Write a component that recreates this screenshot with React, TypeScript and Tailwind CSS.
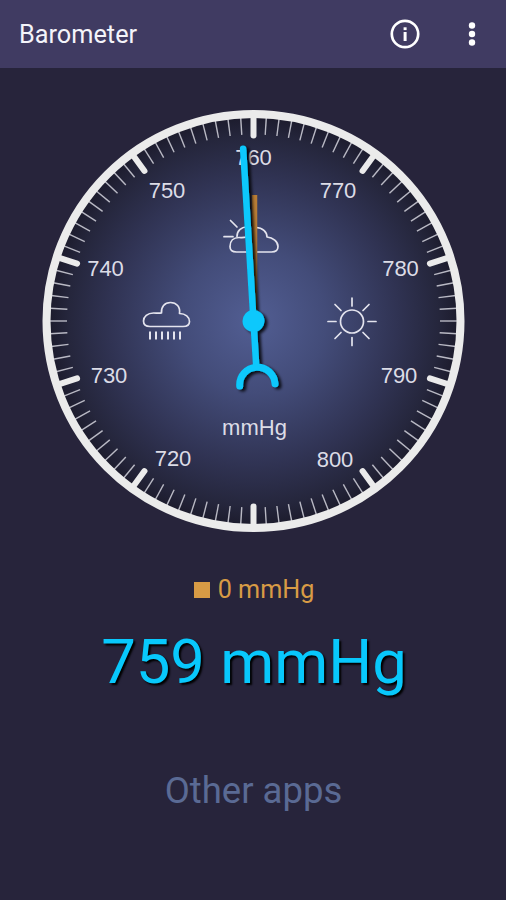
import { useState } from "react";

const MINOR_TICKS = Array.from({ length: 100 }, (_, i) => i).filter((i) => i % 10 !== 0);
const MAJOR_TICKS = Array.from({ length: 10 }, (_, i) => i);

type DialLabel = {
    text: string;
    x: number;
    y: number;
};

// positions are relative to the centre of the dial
const LABELS: DialLabel[] = [
    { text: "720", x: -80.5, y: 144.5 },
    { text: "730", x: -144.5, y: 61.5 },
    { text: "740", x: -148, y: -45.5 },
    { text: "750", x: -86.5, y: -123.5 },
    { text: "760", x: 0, y: -156 },
    { text: "770", x: 84.5, y: -123 },
    { text: "780", x: 147, y: -45.5 },
    { text: "790", x: 145.5, y: 61.5 },
    { text: "800", x: 81.5, y: 146 },
    { text: "mmHg", x: 1, y: 113.5 },
];

function InfoIcon() {
    return (
        <svg width="30" height="30" viewBox="0 0 30 30" fill="none">
            <circle cx="15" cy="15" r="13.2" stroke="#fff" strokeWidth="2.7" />
            <rect x="13.6" y="8.3" width="3" height="2.8" fill="#fff" />
            <rect x="13.6" y="13" width="3" height="9" fill="#fff" />
        </svg>
    );
}

function MoreIcon() {
    return (
        <svg width="8" height="24" viewBox="0 0 8 24" fill="#fff">
            <circle cx="4" cy="3.5" r="3.2" />
            <circle cx="4" cy="12" r="3.2" />
            <circle cx="4" cy="20.5" r="3.2" />
        </svg>
    );
}

function Dial({ value, delta }: { value: number; delta: number }) {
    return (
        <svg width="506" height="480" viewBox="-253.5 -253 506 480" fill="none" className="block shrink-0">
            <defs>
                <radialGradient id="face" gradientUnits="userSpaceOnUse" cx="0" cy="0" r="206">
                    <stop offset="0" stopColor="#525e93" />
                    <stop offset="0.35" stopColor="#434c79" />
                    <stop offset="0.7" stopColor="#303353" />
                    <stop offset="0.9" stopColor="#25263c" />
                    <stop offset="1" stopColor="#1c1b2c" />
                </radialGradient>
                <filter id="shadow" filterUnits="userSpaceOnUse" x="-100" y="-220" width="200" height="340">
                    <feDropShadow dx="3" dy="2" stdDeviation="1.8" floodColor="#000" floodOpacity="0.85" />
                </filter>
            </defs>

            <circle r="207" fill="url(#face)" />
            <g stroke="#b9b9c4" strokeWidth="1.4">
                {MINOR_TICKS.map((i) => (
                    <line key={i} y1="-204" y2="-186.5" transform={`rotate(${i * 3.6})`} />
                ))}
            </g>
            <g stroke="#ebebeb" strokeWidth="6" strokeLinecap="round">
                {MAJOR_TICKS.map((i) => (
                    <line key={i} y1="-205" y2="-185.5" transform={`rotate(${i * 36})`} />
                ))}
            </g>
            <circle r="207" stroke="#ebebeb" strokeWidth="8" />

            <g fill="#dcdce6" fontFamily="'Liberation Sans', sans-serif" fontSize="22" textAnchor="middle">
                {LABELS.map((l) => (
                    <text key={l.text} x={l.x} y={l.y}>
                        {l.text}
                    </text>
                ))}
            </g>

            <g stroke="#e4e4ee" strokeWidth="1.7" strokeLinecap="round" strokeLinejoin="round">
                {/* partly cloudy */}
                <path d="M-17-69c-4 0-6.500-2-6.500-5.500c0-5.500 3.500-9 9-9c3 0 5 .3 7-.5c0-5.500 4-9.500 10-9.500c6.500 0 11 4.500 11 9.500c6 .5 11 4.500 11 9.500c0 3.500-2.500 5.500-6.500 5.500z" />
                <path d="M-16.500-84.500c0-5.500 4-9.500 10-9.500M-29.500-84.300h9M-23-100.500l6.500 6.500" />
                {/* rain */}
                <path d="M-103.500 5.500c-4 0-6.500-2-6.500-5.500c0-4.500 4-8 10-8c3 0 5 .5 8 0c-.5-6 3-10.500 9-10.500c6 0 10 4.500 9 11c6 0 10 3.500 10 8c0 3.500-3 5-6.500 5z" />
                <path
                    d="M-103.500 10.500v8M-97.500 10.500v8M-91.500 10.500v8M-85.500 10.500v8M-79.500 10.500v8M-73.500 10.500v8"
                    strokeWidth="2"
                    strokeLinecap="butt"
                />
                {/* sun */}
                <circle cx="98.500" cy="0.500" r="11.500" />
                <path d="M98.500-23v8M98.500 16.500v8M74.500.5h8M114.500.5h8M81.500-16.500l6 6M109.500 11.500l6 6M115.500-16.500l-6 6M87.500 11.500l-6 6" />
            </g>

            <line y1="-126" y2="0" x1="1" x2="1" stroke="#b97d35" strokeWidth="5.500" transform={`rotate(${delta})`} />
            <g filter="url(#shadow)">
                <g transform={`rotate(${(value - 760) * 3.45})`} stroke="#08c8fc" strokeLinecap="round">
                    <line y1="-172.500" y2="45" strokeWidth="6.500" />
                    <path d="M-17.700 64a17.700 17.700 0 0 1 35.400 0" strokeWidth="7" />
                    <circle r="11" fill="#08c8fc" stroke="none" />
                </g>
            </g>
        </svg>
    );
}

export default function App() {
    const [value] = useState(759);
    const [delta] = useState(0);

    return (
        <div className="flex h-[900px] w-[506px] flex-col overflow-hidden bg-[#27243b] font-[Roboto,sans-serif]">
            <header className="flex h-[68px] shrink-0 items-center bg-[#403b62] pr-[30px] pl-[19px]">
                <h1 className="flex-1 pt-0.5 text-[25.3px] text-[#f4f4fa]">Barometer</h1>
                <button className="mr-[48px]" aria-label="Info">
                    <InfoIcon />
                </button>
                <button aria-label="More">
                    <MoreIcon />
                </button>
            </header>

            <Dial value={value} delta={delta} />

            <div className="mt-6 flex items-center justify-center gap-2 pl-0.5 text-[25.2px] leading-9 text-[#d89b45]">
                <span className="size-4 bg-[#d89b45]" />
                <span>{delta} mmHg</span>
            </div>
            <div className="mt-[18px] pl-0.5 text-center text-[61.6px] leading-[72px] text-[#08c8fc] [text-shadow:2px_2px_2px_#000]">
                {value} mmHg
            </div>
            <div className="mt-[71px] pl-px text-center text-[36.5px] leading-[44px] text-[#5a6a94]">Other apps</div>
        </div>
    );
}
